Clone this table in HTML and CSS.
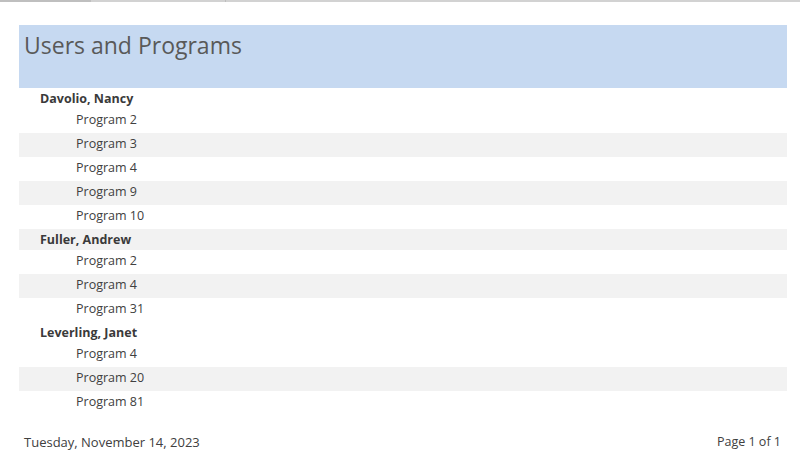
FILE: index.html
```html
<!DOCTYPE html>
<html>
<head>
<meta charset="utf-8">
<link rel="stylesheet" href="styles.css">
</head>
<body>
<div class="topbar"><div class="topbar-dark"></div><div class="topbar-tick"></div></div>
<div class="report">
  <div class="header"><h1 class="title">Users and Programs</h1></div>
  <div class="group">
    <div class="group-row">Davolio, Nancy</div>
    <div class="row">Program 2</div>
    <div class="row alt">Program 3</div>
    <div class="row">Program 4</div>
    <div class="row alt">Program 9</div>
    <div class="row">Program 10</div>
  </div>
  <div class="group">
    <div class="group-row alt">Fuller, Andrew</div>
    <div class="row">Program 2</div>
    <div class="row alt">Program 4</div>
    <div class="row">Program 31</div>
  </div>
  <div class="group">
    <div class="group-row">Leverling, Janet</div>
    <div class="row">Program 4</div>
    <div class="row alt">Program 20</div>
    <div class="row">Program 81</div>
  </div>
  <div class="footer">
    <span class="date">Tuesday, November 14, 2023</span>
    <span class="page">Page 1 of 1</span>
  </div>
</div>
</body>
</html>
```

FILE: styles.css
```css
html, body {
  margin: 0;
  padding: 0;
  background: #ffffff;
}
body {
  font-family: "Open Sans", "Liberation Sans", sans-serif;
  color: #404040;
  width: 800px;
  height: 458px;
  overflow: hidden;
}
.topbar {
  height: 2px;
  background: #d2d2d2;
  display: flex;
}
.topbar-dark {
  width: 91px;
  background: #bfbfbf;
}
.topbar-tick {
  width: 1px;
  margin-left: 134px;
  background: #bdbdbd;
}
.report {
  margin: 23px 13px 0 19px;
}
.header {
  background: #c6d9f1;
  height: 63px;
}
.title {
  margin: 0;
  padding: 5px 0 0 5px;
  font-size: 23px;
  font-weight: 400;
  line-height: 30px;
  color: #595959;
}
.group-row {
  height: 21px;
  line-height: 21px;
  padding-left: 21px;
  font-size: 12.5px;
  font-weight: 700;
  color: #3a3a3a;
}
.row {
  height: 24px;
  line-height: 22px;
  padding-left: 57px;
  font-size: 12.5px;
}
.alt {
  background: #f2f2f2;
}
.footer {
  display: flex;
  justify-content: space-between;
  margin-top: 16px;
  padding: 0 6px 0 5px;
  font-size: 13px;
  line-height: 22px;
}
.page {
  font-size: 12.5px;
}
```
